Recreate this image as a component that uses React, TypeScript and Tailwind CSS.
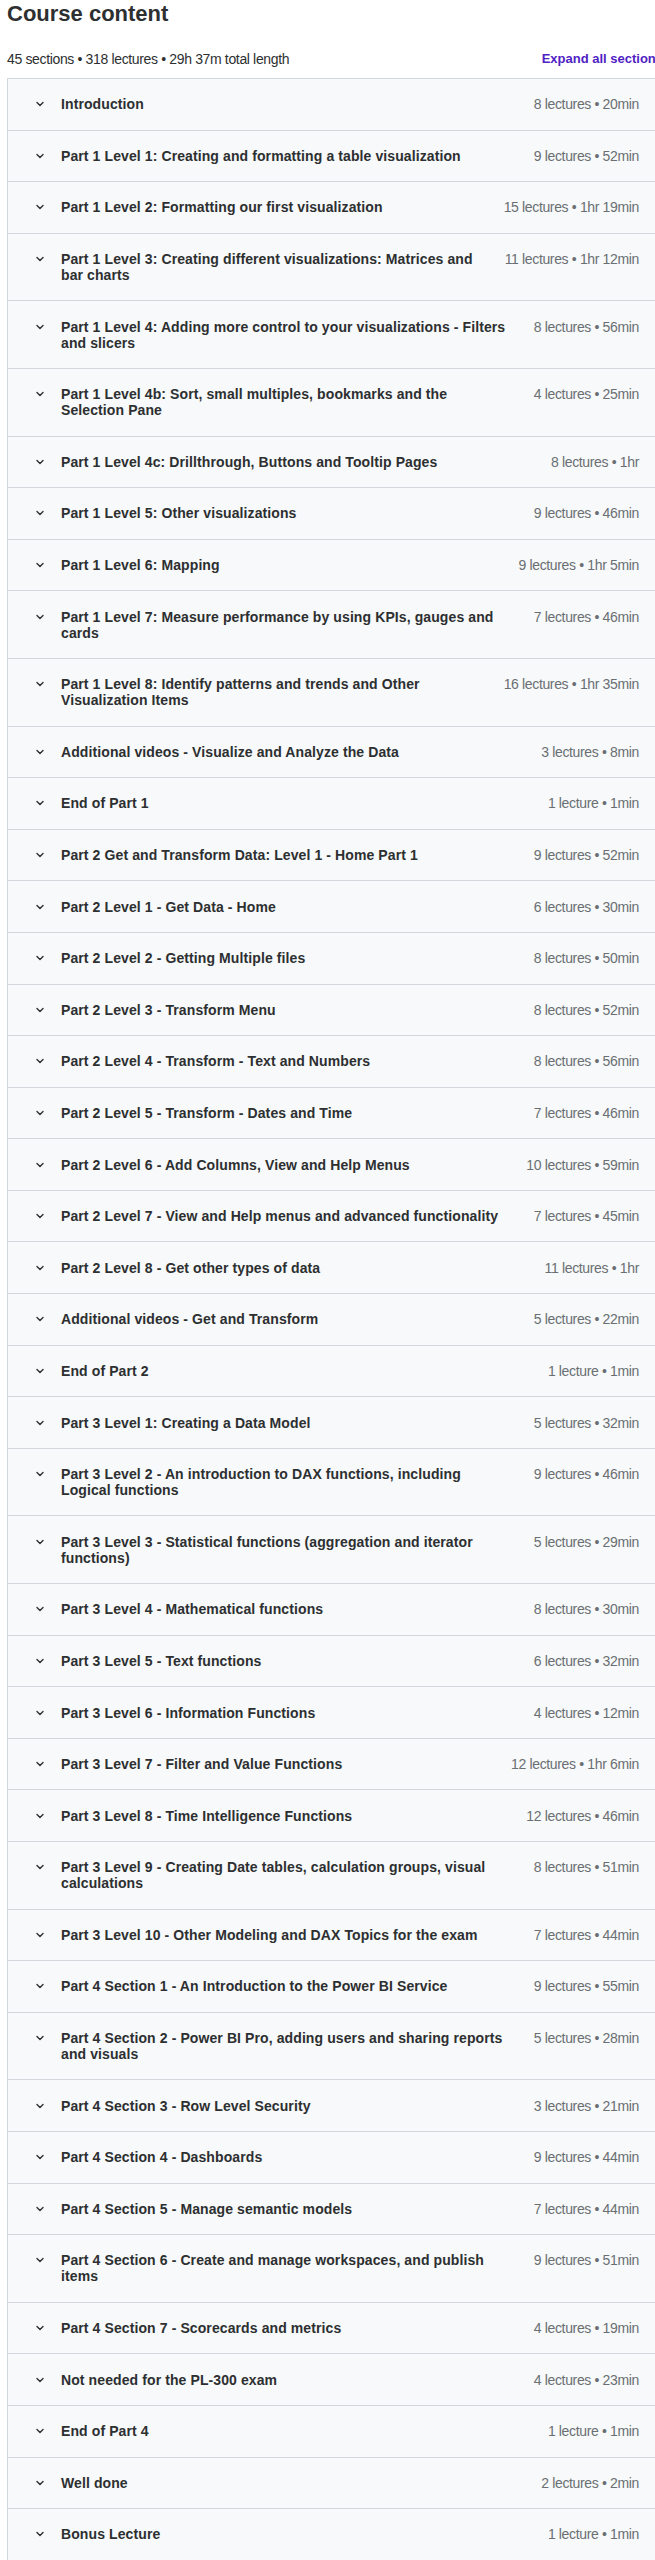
import React from 'react';

type Section = { title: string; meta: string };

const sections: Section[] = [
  { title: 'Introduction', meta: '8 lectures • 20min' },
  { title: 'Part 1 Level 1: Creating and formatting a table visualization', meta: '9 lectures • 52min' },
  { title: 'Part 1 Level 2: Formatting our first visualization', meta: '15 lectures • 1hr 19min' },
  { title: 'Part 1 Level 3: Creating different visualizations: Matrices and bar charts', meta: '11 lectures • 1hr 12min' },
  { title: 'Part 1 Level 4: Adding more control to your visualizations - Filters and slicers', meta: '8 lectures • 56min' },
  { title: 'Part 1 Level 4b: Sort, small multiples, bookmarks and the Selection Pane', meta: '4 lectures • 25min' },
  { title: 'Part 1 Level 4c: Drillthrough, Buttons and Tooltip Pages', meta: '8 lectures • 1hr' },
  { title: 'Part 1 Level 5: Other visualizations', meta: '9 lectures • 46min' },
  { title: 'Part 1 Level 6: Mapping', meta: '9 lectures • 1hr 5min' },
  { title: 'Part 1 Level 7: Measure performance by using KPIs, gauges and cards', meta: '7 lectures • 46min' },
  { title: 'Part 1 Level 8: Identify patterns and trends and Other Visualization Items', meta: '16 lectures • 1hr 35min' },
  { title: 'Additional videos - Visualize and Analyze the Data', meta: '3 lectures • 8min' },
  { title: 'End of Part 1', meta: '1 lecture • 1min' },
  { title: 'Part 2 Get and Transform Data: Level 1 - Home Part 1', meta: '9 lectures • 52min' },
  { title: 'Part 2 Level 1 - Get Data - Home', meta: '6 lectures • 30min' },
  { title: 'Part 2 Level 2 - Getting Multiple files', meta: '8 lectures • 50min' },
  { title: 'Part 2 Level 3 - Transform Menu', meta: '8 lectures • 52min' },
  { title: 'Part 2 Level 4 - Transform - Text and Numbers', meta: '8 lectures • 56min' },
  { title: 'Part 2 Level 5 - Transform - Dates and Time', meta: '7 lectures • 46min' },
  { title: 'Part 2 Level 6 - Add Columns, View and Help Menus', meta: '10 lectures • 59min' },
  { title: 'Part 2 Level 7 - View and Help menus and advanced functionality', meta: '7 lectures • 45min' },
  { title: 'Part 2 Level 8 - Get other types of data', meta: '11 lectures • 1hr' },
  { title: 'Additional videos - Get and Transform', meta: '5 lectures • 22min' },
  { title: 'End of Part 2', meta: '1 lecture • 1min' },
  { title: 'Part 3 Level 1: Creating a Data Model', meta: '5 lectures • 32min' },
  { title: 'Part 3 Level 2 - An introduction to DAX functions, including Logical functions', meta: '9 lectures • 46min' },
  { title: 'Part 3 Level 3 - Statistical functions (aggregation and iterator functions)', meta: '5 lectures • 29min' },
  { title: 'Part 3 Level 4 - Mathematical functions', meta: '8 lectures • 30min' },
  { title: 'Part 3 Level 5 - Text functions', meta: '6 lectures • 32min' },
  { title: 'Part 3 Level 6 - Information Functions', meta: '4 lectures • 12min' },
  { title: 'Part 3 Level 7 - Filter and Value Functions', meta: '12 lectures • 1hr 6min' },
  { title: 'Part 3 Level 8 - Time Intelligence Functions', meta: '12 lectures • 46min' },
  { title: 'Part 3 Level 9 - Creating Date tables, calculation groups, visual calculations', meta: '8 lectures • 51min' },
  { title: 'Part 3 Level 10 - Other Modeling and DAX Topics for the exam', meta: '7 lectures • 44min' },
  { title: 'Part 4 Section 1 - An Introduction to the Power BI Service', meta: '9 lectures • 55min' },
  { title: 'Part 4 Section 2 - Power BI Pro, adding users and sharing reports and visuals', meta: '5 lectures • 28min' },
  { title: 'Part 4 Section 3 - Row Level Security', meta: '3 lectures • 21min' },
  { title: 'Part 4 Section 4 - Dashboards', meta: '9 lectures • 44min' },
  { title: 'Part 4 Section 5 - Manage semantic models', meta: '7 lectures • 44min' },
  { title: 'Part 4 Section 6 - Create and manage workspaces, and publish items', meta: '9 lectures • 51min' },
  { title: 'Part 4 Section 7 - Scorecards and metrics', meta: '4 lectures • 19min' },
  { title: 'Not needed for the PL-300 exam', meta: '4 lectures • 23min' },
  { title: 'End of Part 4', meta: '1 lecture • 1min' },
  { title: 'Well done', meta: '2 lectures • 2min' },
  { title: 'Bonus Lecture', meta: '1 lecture • 1min' },
];

const Chevron = () => (
  <svg viewBox="0 0 16 16" className="h-4 w-4 text-[#2d2f31]" fill="none">
    <path d="M5 6.5 8 9.5 11 6.5" stroke="currentColor" strokeWidth="1.4" strokeLinecap="round" strokeLinejoin="round" />
  </svg>
);

const App = () => {
  return (
    <div className="w-[655px] overflow-hidden bg-white pl-[7px] text-[#2d2f31] font-['Liberation_Sans',Arial,sans-serif]">
      <div className="w-[656px]">

        {/* ── Header ─────────────────────────────────────────── */}
        <h2 className="text-[22px] font-bold leading-[28px]">Course content</h2>

        <div className="mt-[21px] mb-[9px] flex h-5 items-center justify-between">
          <span className="text-[14px] leading-5 tracking-[-0.35px]">
            45 sections • 318 lectures • 29h 37m total length
          </span>
          <button className="text-[13px] font-bold leading-5 text-[#5022c3]">
            Expand all sections
          </button>
        </div>

        {/* ── Section list ───────────────────────────────────── */}
        <div className="border-l border-[#d1d7dc]">
          {sections.map((s) => (
            <div
              key={s.title}
              className="flex items-start border-t border-[#d1d7dc] bg-[#f7f9fa] py-[17.3px] pl-6 pr-6"
            >
              <div className="mr-[13px] flex h-4 shrink-0 items-center">
                <Chevron />
              </div>
              <span className="min-w-0 flex-1 text-[14px] font-bold leading-4 tracking-[0.1px]">
                {s.title}
              </span>
              <span className="ml-6 shrink-0 whitespace-nowrap text-[14px] leading-4 tracking-[-0.35px] text-[#6a6f73]">
                {s.meta}
              </span>
            </div>
          ))}
        </div>
      </div>
    </div>
  );
};

export default App;
